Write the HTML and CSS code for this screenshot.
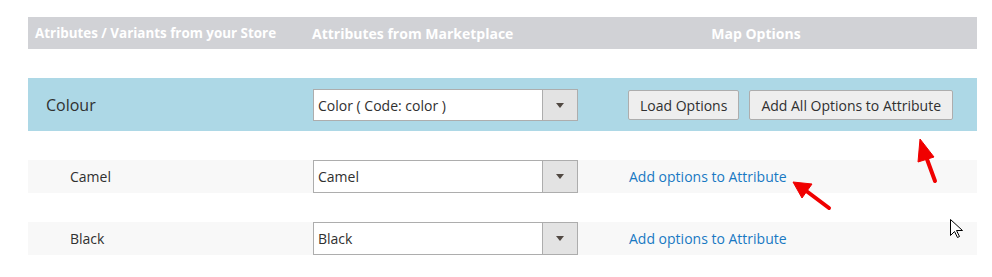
FILE: index.html
```html
<!DOCTYPE html>
<html>
<head>
<meta charset="utf-8">
<link rel="stylesheet" href="styles.css">
</head>
<body>
<div class="table">
  <div class="head">
    <div class="h1">Atributes / Variants from your Store</div>
    <div class="h2">Attributes from Marketplace</div>
    <div class="h3">Map Options</div>
  </div>
  <div class="row attr">
    <div class="label">Colour</div>
    <div class="select"><span class="val">Color ( Code: color )</span><span class="btn"><i class="tri"></i></span></div>
    <div class="actions">
      <button class="b">Load Options</button>
      <button class="b">Add All Options to Attribute</button>
    </div>
  </div>
  <div class="row opt">
    <div class="label sub">Camel</div>
    <div class="select"><span class="val">Camel</span><span class="btn"><i class="tri"></i></span></div>
    <div class="actions"><a class="link">Add options to Attribute</a></div>
  </div>
  <div class="row opt">
    <div class="label sub">Black</div>
    <div class="select"><span class="val">Black</span><span class="btn"><i class="tri"></i></span></div>
    <div class="actions"><a class="link">Add options to Attribute</a></div>
  </div>
</div>
<svg class="overlay" width="992" height="277" viewBox="0 0 992 277">
  <g fill="#f00000" stroke="#f00000" stroke-linejoin="round">
    <line x1="935" y1="181" x2="924" y2="151" stroke-width="4" stroke-linecap="round"/>
    <polygon points="920,139 934,157 918,162"/>
    <line x1="829" y1="208" x2="805" y2="190" stroke-width="4" stroke-linecap="round"/>
    <polygon points="793,182 812,184 802,198"/>
  </g>
  <path d="M950.5 219.5 L950.5 235.5 L954.5 231.5 L957.5 237.5 L959.5 236.5 L956.5 230.5 L962.5 230.5 Z" fill="#fff" stroke="#000" stroke-width="1"/>
</svg>
</body>
</html>
```
FILE: styles.css
```css
body {
  margin: 17px 15px 0 28px;
  font-family: "Open Sans", "Liberation Sans", sans-serif;
  color: #303030;
  background: #fff;
}
.table {
  display: flex;
  flex-direction: column;
  gap: 29px;
  width: 949px;
}
.head {
  display: grid;
  grid-template-columns: 277px 230px 1fr;
  height: 32px;
  align-items: center;
  background: #d1d2d6;
  color: #fff;
  font-size: 14px;
  font-weight: 700;
}
.h1 { padding-left: 7px; font-size: 13.4px; }
.h2 { padding-left: 7px; }
.h3 { text-align: center; }
.row {
  display: grid;
  grid-template-columns: 285px 265px 1fr;
  align-items: center;
}
.attr {
  background: #add8e6;
  height: 53px;
  padding-top: 1px;
  box-sizing: border-box;
}
.opt {
  background: #f8f8f8;
  height: 33px;
}
.label {
  padding-left: 18px;
  font-size: 16px;
  font-weight: 400;
}
.label.sub {
  padding-left: 42px;
  font-size: 14px;
  font-weight: 400;
}
.select {
  display: flex;
  height: 32px;
  box-sizing: border-box;
  border: 1px solid #adadad;
  background: #fff;
  font-size: 14px;
}
.opt .select { height: 33px; }
.val {
  flex: 1;
  padding-left: 4px;
  display: flex;
  align-items: center;
}
.btn {
  width: 34px;
  border-left: 1px solid #adadad;
  background: #e3e3e3;
  display: flex;
  align-items: center;
  justify-content: center;
}
.tri {
  width: 0;
  height: 0;
  border-left: 4px solid transparent;
  border-right: 4px solid transparent;
  border-top: 5px solid #514943;
}
.actions {
  display: flex;
  gap: 10px;
  padding-left: 50px;
  align-items: center;
}
.b {
  font-family: inherit;
  font-size: 14px;
  color: #303030;
  height: 30px;
  padding: 0 11px;
  background: #eee;
  border: 1px solid #adadad;
  border-radius: 2px;
}
.link {
  color: #1979c3;
  font-size: 14px;
  padding-left: 1px;
}
.overlay {
  position: absolute;
  left: 0;
  top: 0;
  pointer-events: none;
}
```
